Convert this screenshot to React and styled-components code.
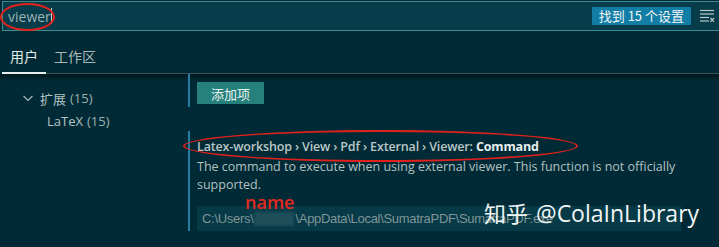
import React from "react";
import styled, { createGlobalStyle } from "styled-components";

const Global = createGlobalStyle`
  html, body { margin: 0; padding: 0; background: #002b36; }
  body { font-family: "Open Sans", "Noto Sans CJK SC", sans-serif; }
`;

const Page = styled.div`
  position: relative;
  width: 719px;
  height: 247px;
  background: #002b36;
  overflow: hidden;
  color: #c4cfcf;
`;

const SearchBar = styled.div`
  margin: 1px 0 0 2px;
  height: 28px;
  border: 1px solid #3b8c90;
  border-right: none;
  background: #073c4a;
  display: flex;
  align-items: center;
  padding: 0 4px 0 5px;
`;

const SearchText = styled.div`
  flex: 1;
  font-size: 14px;
  color: #9db3b5;
  display: flex;
  align-items: center;
`;

const Caret = styled.span`
  display: inline-block;
  width: 1px;
  height: 16px;
  background: #c8d4d4;
`;

const Badge = styled.div`
  background: #127ea6;
  color: #f2f6f6;
  font-family: "Noto Sans CJK SC", sans-serif;
  font-size: 13px;
  line-height: 18px;
  padding: 0 7px;
  margin-right: 8px;
  border-radius: 1px;
`;

const ClearIcon = styled.svg`
  width: 16px;
  height: 14px;
  display: block;
`;

const TabsBar = styled.div`
  height: 42px;
  margin: 0 0 0 2px;
  display: flex;
  align-items: flex-end;
  border-bottom: 1px solid #3a5259;
`;

const Tab = styled.div`
  font-family: "Noto Sans CJK SC", sans-serif;
  font-size: 14px;
  color: ${(p) => (p.$active ? "#e4ecec" : "#a9b8b8")};
  padding: 0 8px 8px;
  height: 28px;
  box-sizing: border-box;
  border-bottom: 2px solid ${(p) => (p.$active ? "#e6eded" : "transparent")};
  margin-bottom: -1px;
  line-height: 20px;
`;

const Body = styled.div`
  display: flex;
  height: 172px;
  box-shadow: inset 0 6px 5px -3px #00161d;
`;

const Tree = styled.div`
  width: 188px;
  flex: none;
  padding-top: 15px;
  display: flex;
  flex-direction: column;
  gap: 5px;
`;

const TreeItem = styled.div`
  display: flex;
  align-items: center;
  height: 18px;
  padding-left: ${(p) => p.$indent}px;
  font-size: 13px;
  color: #b5c3c3;
`;

const TreeLabel = styled.span`
  font-family: "Noto Sans CJK SC", sans-serif;
`;

const Chevron = styled.svg`
  width: 12px;
  height: 12px;
  margin-right: 6px;
`;

const Count = styled.span`
  color: #9fb0b0;
  margin-left: 4px;
`;

const List = styled.div`
  flex: 1;
  display: flex;
  flex-direction: column;
`;

const Setting = styled.div`
  border-left: 2px solid #217ea0;
  padding-left: 7px;
  padding-top: ${(p) => p.$top || 0}px;
  padding-bottom: ${(p) => p.$bottom || 0}px;
  margin-top: ${(p) => p.$gap || 0}px;
`;

const AddButton = styled.div`
  width: 67px;
  height: 22px;
  background: #26807b;
  color: #eaf3f2;
  font-family: "Noto Sans CJK SC", sans-serif;
  font-size: 13px;
  display: flex;
  align-items: center;
  justify-content: center;
`;

const Title = styled.div`
  font-size: 12.5px;
  font-weight: 600;
  color: #b9c6c6;
  line-height: 18px;
  letter-spacing: -0.15px;
  & b {
    color: #e7eeee;
    font-weight: 700;
  }
`;

const Desc = styled.div`
  font-size: 12.5px;
  color: #b3c0c0;
  line-height: 18px;
  width: 480px;
  margin-top: 2px;
`;

const InputBox = styled.div`
  margin-top: 12px;
  width: 484px;
  height: 25px;
  background: #073a47;
  font-family: "Liberation Sans", sans-serif;
  font-size: 13px;
  color: #7f9597;
  display: flex;
  align-items: center;
  padding-left: 5px;
  box-sizing: border-box;
  white-space: nowrap;
  overflow: hidden;
  letter-spacing: -0.3px;
`;

const Blur = styled.span`
  display: inline-block;
  width: 40px;
  height: 14px;
  background: #1d4e5a;
  filter: blur(1.2px);
  margin: 0 1px;
`;

const Ellipse = styled.div`
  position: absolute;
  border: 2.5px solid #e3211c;
  border-radius: 50%;
  box-sizing: border-box;
  pointer-events: none;
`;

const NameLabel = styled.div`
  position: absolute;
  left: 245px;
  top: 192px;
  font-family: "Open Sans", sans-serif;
  font-size: 18px;
  font-weight: 600;
  color: #e22a22;
  line-height: 20px;
`;

const Watermark = styled.div`
  position: absolute;
  left: 484px;
  top: 197px;
  font-family: "Noto Sans CJK SC", "Open Sans", sans-serif;
  font-size: 22px;
  color: #f1f5f5;
  line-height: 30px;
  white-space: nowrap;
  display: flex;
  align-items: baseline;
`;

const Handle = styled.span`
  font-family: "Open Sans", sans-serif;
  font-size: 23px;
  margin-left: 8px;
`;

export default function App() {
  return (
    <Page>
      <Global />
      <SearchBar>
        <SearchText>
          viewer
          <Caret />
        </SearchText>
        <Badge>找到 15 个设置</Badge>
        <ClearIcon viewBox="0 0 16 14">
          <g stroke="#b9c9c9" strokeWidth="1.2">
            <line x1="1" y1="1.5" x2="15" y2="1.5" />
            <line x1="1" y1="5" x2="15" y2="5" />
            <line x1="1" y1="8.5" x2="10" y2="8.5" />
            <line x1="1" y1="12" x2="10" y2="12" />
            <line x1="11.5" y1="9" x2="15" y2="12.8" />
            <line x1="15" y1="9" x2="11.5" y2="12.8" />
          </g>
        </ClearIcon>
      </SearchBar>
      <TabsBar>
        <Tab $active>用户</Tab>
        <Tab>工作区</Tab>
      </TabsBar>
      <Body>
        <Tree>
          <TreeItem $indent={22}>
            <Chevron viewBox="0 0 12 12">
              <path d="M1.5 4 L6 8.5 L10.5 4" fill="none" stroke="#a9b8b8" strokeWidth="1.2" />
            </Chevron>
            <TreeLabel>扩展</TreeLabel>
            <Count>(15)</Count>
          </TreeItem>
          <TreeItem $indent={47}>
            LaTeX<Count>(15)</Count>
          </TreeItem>
        </Tree>
        <List>
          <Setting $top={8} $bottom={3}>
            <AddButton>添加项</AddButton>
          </Setting>
          <Setting $gap={24} $top={7}>
            <Title>
              Latex-workshop › View › Pdf › External › Viewer: <b>Command</b>
            </Title>
            <Desc>
              The command to execute when using external viewer. This function is not officially
              supported.
            </Desc>
            <InputBox>
              C:\Users\<Blur />\AppData\Local\SumatraPDF\SumatraPDF.exe
            </InputBox>
          </Setting>
        </List>
      </Body>
      <Ellipse style={{ left: 0, top: 3, width: 55, height: 28 }} />
      <Ellipse style={{ left: 183, top: 130, width: 395, height: 32 }} />
      <NameLabel>name</NameLabel>
      <Watermark>
        知乎<Handle>@ColaInLibrary</Handle>
      </Watermark>
    </Page>
  );
}
